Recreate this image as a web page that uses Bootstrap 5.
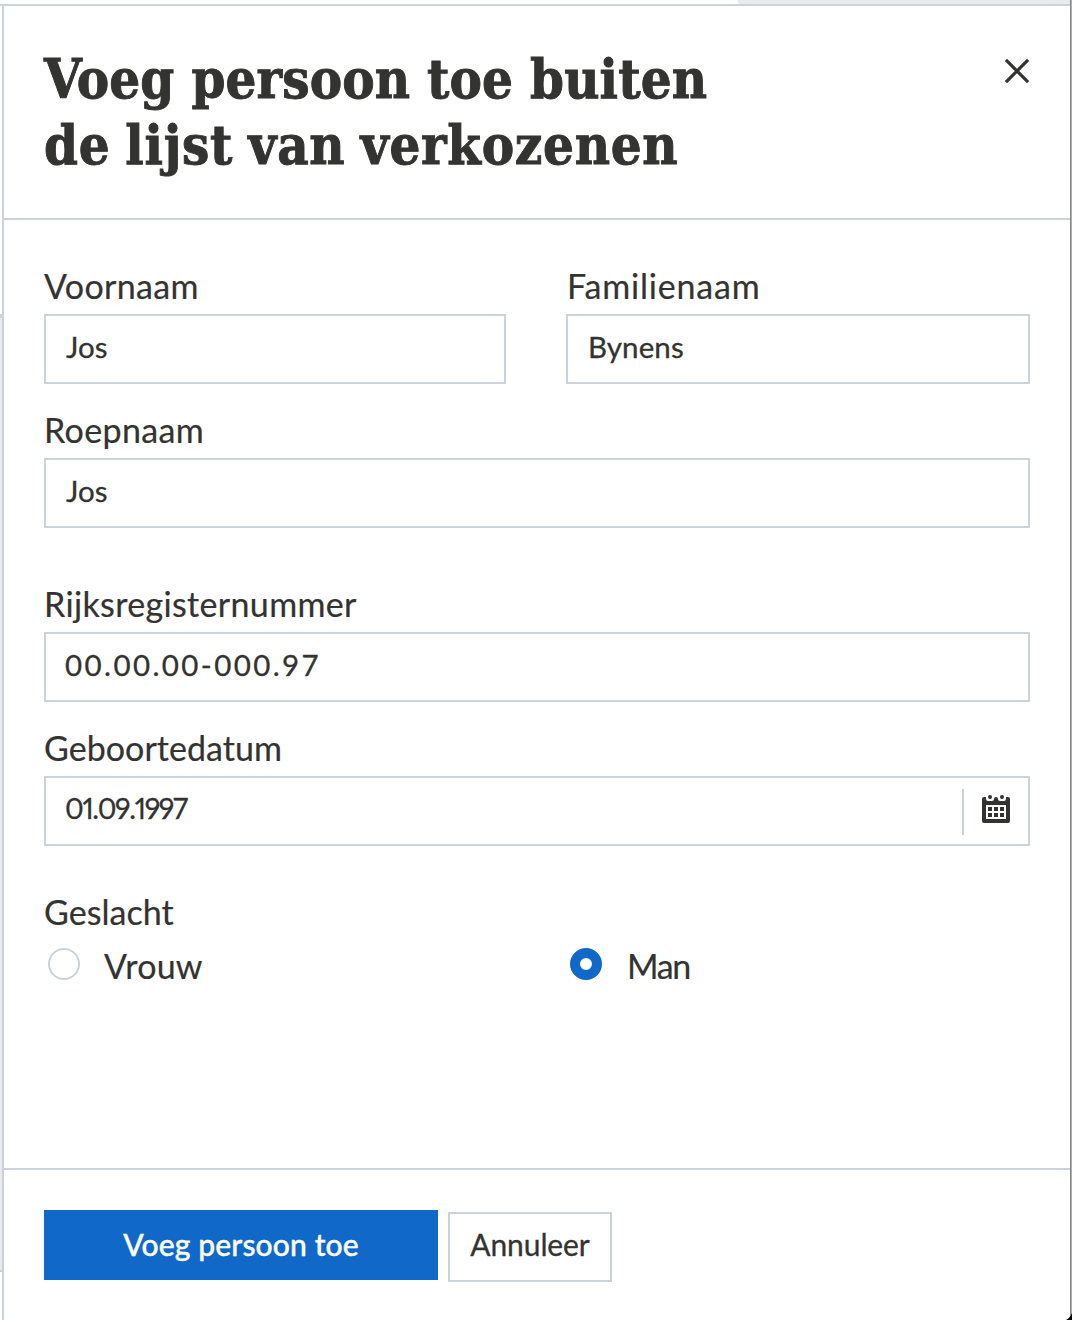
<!DOCTYPE html>
<html lang="nl">
<head>
<meta charset="utf-8">
<meta name="viewport" content="width=device-width, initial-scale=1">
<title>Voeg persoon toe</title>
<link rel="stylesheet" href="https://cdn.jsdelivr.net/npm/bootstrap@5.3.0/dist/css/bootstrap.min.css">
<style>
:root{--line:#cbd2da;--ink:#333332;--blue:#1069c9}
body{font-family:Lato,"Open Sans",sans-serif;color:var(--ink);background:#fff;height:1320px;overflow:hidden}
.page-top{height:4px}
.page-tab{width:335px;height:4px;background:#e8ebee;clip-path:polygon(0 0,100% 0,100% 100%,2px 100%)}
.page-main{height:1316px;border-top:2px solid var(--line)}
.page-side{width:2px}
.side-a{height:308px}
.side-b{height:958px;background:#e9e9eb;border-top:4px solid var(--line);border-bottom:2px solid var(--line)}
.panel{border-left:2px solid var(--line)}
.panel-head{height:214px;padding:40px 42px 0 40px;border-bottom:2px solid var(--line)}
.panel-head h1{font:bold condensed 54px/66px "DejaVu Serif Condensed","DejaVu Serif",serif;margin:0;-webkit-text-stroke:.9px var(--ink)}
.panel-head h1 span{display:block;white-space:nowrap;letter-spacing:.1px}
.panel-head h1 span+span{letter-spacing:.7px;word-spacing:-2.5px}
.close-x{width:26px;height:26px;margin-top:12px}
.panel-body{height:950px;padding:43px 42px 0 40px;border-bottom:2px solid var(--line)}
.form-label{font-size:34px;line-height:45px;letter-spacing:.35px;margin:0 0 6px;display:block;-webkit-text-stroke:.2px var(--ink)}
.label-wide{letter-spacing:.8px;padding-left:1px}
.label-tight{letter-spacing:.05px}
.form-control,.form-control:focus{height:70px;border:2px solid var(--line);border-radius:0;padding:0 20px 6px;font-size:29.5px;line-height:60px;letter-spacing:.1px;color:var(--ink);box-shadow:none;background:#fff;-webkit-text-stroke:.3px var(--ink)}
.field{margin-bottom:23px}
.field-gap{margin-bottom:53px}
.col-first{width:462px}
.col-second{width:464px}
.pair{gap:60px}
.masked.form-control{letter-spacing:2.4px;padding-left:19px}
.dated.form-control{letter-spacing:-1.35px;font-size:28.5px;font-kerning:none;font-variant-numeric:proportional-nums;border:0;height:66px;padding-left:19px;background:transparent}
.date-box{height:70px;border:2px solid var(--line)}
.date-btn{width:66px;height:46px;border-left:2px solid var(--line);margin-top:1px}
.date-btn svg{margin-top:-5px}
.gender{padding-top:43px}
.form-check-input.round-radio{width:32px;height:32px;margin:0 24px 4px 4px;border:2px solid var(--line);background-image:none;box-shadow:none;float:none}
.form-check-input.round-radio:checked{border:10px solid var(--blue);background:#fff}
.radio-row{font-size:34px;line-height:44px;letter-spacing:.2px;margin-top:10px;-webkit-text-stroke:.2px var(--ink)}
.radio-row .tight{letter-spacing:-1.4px}
.radio-row .tight .round-radio{margin-right:25px}
.panel-foot{padding:40px 42px 0 40px;gap:10px}
.btn{border-radius:0;font-size:30px;padding:0;white-space:nowrap}
.btn-main{width:394px;height:70px;line-height:68px;padding-bottom:2px;background:var(--blue);color:#fff;border:0;font-weight:500;letter-spacing:.15px;-webkit-text-stroke:.4px #fff}
.btn-plain{width:164px;height:70px;line-height:60px;border:2px solid var(--line);color:var(--ink);letter-spacing:-.1px;margin-top:2px;padding-bottom:6px;background:#fff;-webkit-text-stroke:.3px var(--ink)}
.win-edge{width:2px;height:1320px;right:0;top:0;background:linear-gradient(90deg,#858585 50%,#b0b0b0 50%)}
.win-corner{right:0;bottom:0;width:6px;height:7px}
</style>
<script src="https://cdn.jsdelivr.net/npm/bootstrap@5.3.0/dist/js/bootstrap.bundle.min.js"></script>
</head>
<body class="position-relative">
<div class="page-top d-flex justify-content-end"><div class="page-tab"></div></div>
<div class="page-main d-flex">
  <div class="page-side flex-shrink-0"><div class="side-a"></div><div class="side-b"></div></div>
  <main class="panel flex-grow-1">
    <header class="panel-head d-flex justify-content-between align-items-start">
      <h1><span>Voeg persoon toe buiten</span><span>de lijst van verkozenen</span></h1>
      <button class="close-x border-0 bg-transparent p-0 d-flex" type="button" aria-label="Sluiten"><svg width="26" height="26" viewBox="0 0 26 26" fill="none" stroke="#333332" stroke-width="3.1"><path d="M1.9 1.9 24.1 24.1M24.1 1.9 1.9 24.1"/></svg></button>
    </header>
    <form class="panel-body">
      <div class="pair d-flex">
        <div class="field col-first"><label class="form-label" for="fn">Voornaam</label><input class="form-control" id="fn" value="Jos"></div>
        <div class="field col-second"><label class="form-label label-wide" for="ln">Familienaam</label><input class="form-control" id="ln" value="Bynens"></div>
      </div>
      <div class="field-gap"><label class="form-label" for="cn">Roepnaam</label><input class="form-control" id="cn" value="Jos"></div>
      <div class="field"><label class="form-label" for="rr">Rijksregisternummer</label><input class="form-control masked" id="rr" value="00.00.00-000.97"></div>
      <div><label class="form-label label-tight" for="bd">Geboortedatum</label>
        <div class="date-box d-flex align-items-center"><input class="form-control dated flex-grow-1" id="bd" value="01.09.1997">
          <div class="date-btn flex-shrink-0 d-flex justify-content-center align-items-center"><svg width="28" height="28" viewBox="0 0 28 28" overflow="visible"><path fill="#333332" fill-rule="evenodd" d="M0 4q0-2 2-2h2v2q0 2 2 2h4q2 0 2-2 0-2 2-2t2 2q0 2 2 2h4q2 0 2-2V2h2q2 0 2 2v22q0 2-2 2H2q-2 0-2-2ZM4 10v14h20V10Z"/><path fill="#333332" d="M6 12h4v4H6Zm6 0h4v4h-4Zm6 0h4v4h-4ZM6 18h4v4H6Zm6 0h4v4h-4Zm6 0h4v4h-4Z"/><circle cx="8" cy="2" r="2" fill="#333332"/><circle cx="20" cy="2" r="2" fill="#333332"/></svg></div>
        </div></div>
      <div class="gender"><div class="form-label label-tight">Geslacht</div>
        <div class="radio-row d-flex pair">
          <label class="col-first d-flex align-items-center"><input class="form-check-input round-radio" type="radio" name="g">Vrouw</label>
          <label class="col-second d-flex align-items-center tight"><input class="form-check-input round-radio" type="radio" name="g" checked>Man</label>
        </div></div>
    </form>
    <footer class="panel-foot d-flex align-items-start">
      <button class="btn btn-main" type="button">Voeg persoon toe</button>
      <button class="btn btn-plain" type="button">Annuleer</button>
    </footer>
  </main>
</div>
<div class="win-edge position-absolute"></div>
<svg class="win-corner position-absolute" viewBox="0 0 6 7"><path d="M6 0v7H0Q4 5 6 0Z"/></svg>
</body>
</html>
